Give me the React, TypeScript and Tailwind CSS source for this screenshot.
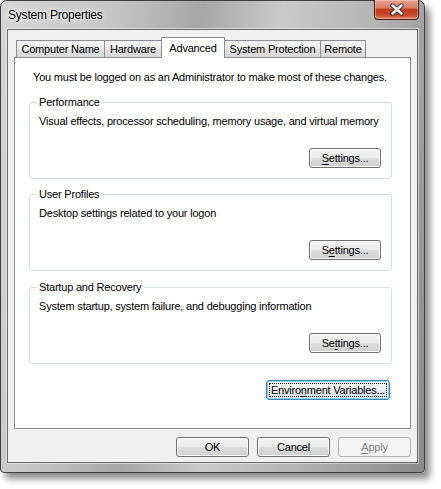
import React from "react";

const btn =
  "h-[20px] rounded-[3px] border border-[#707070] bg-[linear-gradient(#f2f2f2_0%,#ebebeb_50%,#dddddd_50%,#cfcfcf_100%)] shadow-[inset_0_0_0_1px_#fbfbfb] text-[11px] leading-[18px] text-black flex items-center justify-center";

const tabBase =
  "h-[17px] -ml-px border border-b-0 border-[#898c95] bg-[linear-gradient(#f5f5f5_0%,#ececec_50%,#e0e0e0_50%,#d9d9d9_100%)] text-[11px] leading-[16px] flex items-center justify-center whitespace-nowrap";

function Mn({ c }: { c: string }) {
  return <span className="underline underline-offset-[2px]">{c}</span>;
}

function Group({
  title,
  desc,
  btnLabel,
  className = "",
}: {
  title: string;
  desc: string;
  btnLabel: React.ReactNode;
  className?: string;
}) {
  return (
    <div
      className={`relative ml-[14px] w-[363px] h-[77px] rounded-[3px] border border-[#d5dfe5] flex flex-col ${className}`}
    >
      <span className="absolute -top-[8px] left-[7px] px-[2px] bg-white text-[11px] leading-[15px] whitespace-nowrap">
        {title}
      </span>
      <p className="pt-[11px] pl-[9px] text-[11px] leading-[15px] whitespace-nowrap">{desc}</p>
      <button className={`${btn} w-[72px] self-end mt-auto mb-[10px] mr-[10px]`}>
        {btnLabel}
      </button>
    </div>
  );
}

export default function App() {
  return (
    <div className="w-[441px] h-[489px] bg-white font-['Liberation_Sans',Arial,sans-serif] tracking-[-0.2px] text-black">
      {/* window frame */}
      <div className="w-[425px] h-[473px] rounded-t-[7px] rounded-b-[4px] border border-[#3e3e3e] bg-[linear-gradient(100deg,#d6d6d6_0%,#c6c6c6_22%,#a6a6a6_40%,#cacaca_56%,#b4b4b4_74%,#8a8a8a_100%)] shadow-[5px_6px_7px_rgba(0,0,0,0.45)] flex flex-col">
        {/* title bar */}
        <div className="h-[28px] flex items-start justify-between">
          <span className="pl-[7px] pt-[7px] text-[12px] leading-[15px] text-black [text-shadow:0_0_6px_#ffffff,0_0_3px_#ffffff]">
            System Properties
          </span>
          <button className="-mt-px mr-[5px] w-[45px] h-[20px] rounded-b-[4px] border border-t-0 border-[#4a1d15] bg-[linear-gradient(#e9a692_0%,#d97b63_42%,#c23a1e_50%,#c9452a_78%,#e1836a_100%)] shadow-[inset_0_0_0_1px_rgba(255,210,200,0.45)] flex items-center justify-center">
            <svg width="16" height="13" viewBox="0 0 16 13">
              <path d="M3.5 2.5L12.5 10.5M12.5 2.5L3.5 10.5" stroke="#3b3b3b" strokeWidth="4.4" strokeLinecap="round" />
              <path d="M3.5 2.5L12.5 10.5M12.5 2.5L3.5 10.5" stroke="#ffffff" strokeWidth="2.4" strokeLinecap="round" />
            </svg>
          </button>
        </div>

        {/* client area */}
        <div className="mx-[6px] h-[434px] border border-[#6a6a6a] bg-[#f0f0f0] px-[6px] pt-[7px] flex flex-col shadow-[0_0_0_1px_rgba(255,255,255,0.45)]">
          {/* tabs */}
          <div className="h-[20px] pl-[3px] flex items-end">
            <div className={`${tabBase} w-[89px]`}>Computer Name</div>
            <div className={`${tabBase} w-[58px]`}>Hardware</div>
            <div className="relative z-10 -ml-px -mb-px h-[21px] w-[64px] border border-b-0 border-[#898c95] bg-white text-[11px] leading-[16px] flex items-start justify-center pt-[2px]">
              Advanced
            </div>
            <div className={`${tabBase} w-[97px]`}>System Protection</div>
            <div className={`${tabBase} w-[46px]`}>Remote</div>
          </div>

          {/* panel */}
          <div className="w-[397px] h-[372px] border border-[#898c95] bg-white flex flex-col">
            <p className="pt-[12px] pl-[18px] text-[11px] leading-[15px] whitespace-nowrap">
              You must be logged on as an Administrator to make most of these changes.
            </p>
            <Group
              className="mt-[17px]"
              title="Performance"
              desc="Visual effects, processor scheduling, memory usage, and virtual memory"
              btnLabel={
                <span>
                  <Mn c="S" />
                  ettings...
                </span>
              }
            />
            <Group
              className="mt-[15px]"
              title="User Profiles"
              desc="Desktop settings related to your logon"
              btnLabel={
                <span>
                  S<Mn c="e" />
                  ttings...
                </span>
              }
            />
            <Group
              className="mt-[16px]"
              title="Startup and Recovery"
              desc="System startup, system failure, and debugging information"
              btnLabel={
                <span>
                  Se<Mn c="t" />
                  tings...
                </span>
              }
            />
            <button className="mt-[16px] self-end mr-[20px] w-[124px] h-[20px] rounded-[3px] border border-[#3c7fb1] bg-[linear-gradient(#f6f8f9_0%,#eff2f4_50%,#e3e8eb_50%,#dce2e6_100%)] shadow-[inset_0_0_0_1px_#8fd2f6] p-[2px] flex">
              <span className="flex-1 border border-dotted border-[#222] text-[11px] leading-[12px] flex items-center justify-center whitespace-nowrap">
                <span>
                  Enviro<Mn c="n" />ment Variables...
                </span>
              </span>
            </button>
          </div>

          {/* dialog buttons */}
          <div className="mt-[8px] flex justify-end gap-[8px]">
            <button className={`${btn} w-[73px]`}>OK</button>
            <button className={`${btn} w-[73px]`}>Cancel</button>
            <button className="h-[20px] w-[73px] rounded-[3px] border border-[#adb2b5] bg-[#f4f4f4] text-[11px] leading-[18px] text-[#838383] flex items-center justify-center">
              <span>
                <Mn c="A" />
                pply
              </span>
            </button>
          </div>
        </div>
      </div>
    </div>
  );
}
